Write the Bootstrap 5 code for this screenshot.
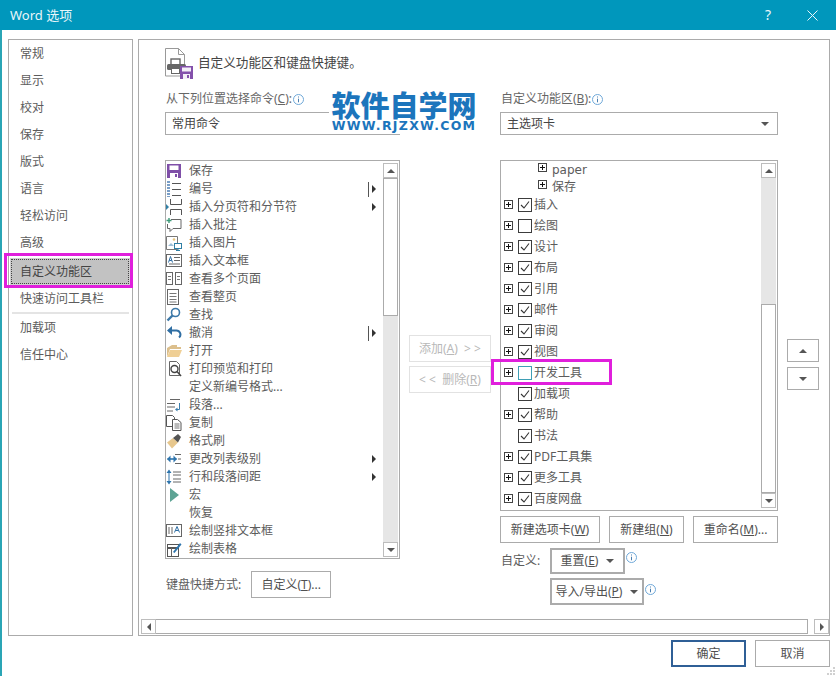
<!DOCTYPE html>
<html lang="zh"><head><meta charset="utf-8"><title>Word 选项</title>
<link href="https://cdn.jsdelivr.net/npm/bootstrap@5.3.0/dist/css/bootstrap.min.css" rel="stylesheet">
<style>
html,body{margin:0;width:836px;height:676px;overflow:hidden;background:#fff}
body{font-family:"Noto Sans","Noto Sans CJK SC",sans-serif;font-size:12px;line-height:18px;color:#5c5c5c}
svg{display:block;flex:none}
.dlg{width:836px;height:676px;border-left:2px solid #2aa5b5}
.ttl{height:30px;background:#0097bc;color:#e8f6fa;font-size:13px;padding-left:10px;margin-left:-2px}
.ttl .q{margin-left:auto;font-size:14px;margin-right:36px}
.ttl .x{margin-right:18px}
.dbody{padding:9px 0 0 6px;gap:5px;height:606px}
.side{width:125px;height:597px;border:1px solid #ababab;flex:none;padding-top:0}
.sitem{height:27px;line-height:27px;padding-left:11px}
.ssel{position:relative;margin:2px 2px 0 1px;padding-left:10px;background:#c2c2c2;color:#444;box-shadow:inset 0 0 0 1px #d0d0d0;outline:1px dotted #444;outline-offset:-2px}
.mag{position:absolute;border:3px solid #e01fdc;pointer-events:none}
.m1{left:-6px;top:-5px;width:129px;height:35px}
.m2{left:352px;top:319px;width:121px;height:26px}
.sep{height:2px;background:#e4e4e4;margin:0 3px}
.pnl{width:692px;height:597px;border:1px solid #ababab;position:relative;flex:none}
.hdr{padding:7px 0 0 26px;height:50px;gap:5px;color:#444}
.hdr span{font-size:12.6px;margin-top:7px}
.cols{padding-left:26px;gap:9px;height:0;flex:1 1 0}
.cl{width:235px;flex:none}
.cm{width:82px;flex:none;padding-top:245px;gap:4px}
.cr{width:278px;flex:none}
.cu{width:32px;flex:none;padding-top:249px;gap:5px}
.lbl{height:18px;line-height:18px;margin-bottom:4px;padding-left:1px;gap:1px;color:#666}
.combo{height:23px;border:1px solid #ababab;line-height:21px;padding-left:6px;margin-bottom:25px;color:#444;background:#fff}
.wbtn{--bs-btn-padding-x:0;--bs-btn-padding-y:0;--bs-btn-font-size:12px;--bs-btn-line-height:25px;--bs-btn-border-radius:0;--bs-btn-border-color:#ababab;--bs-btn-bg:#fff;--bs-btn-color:#505050;--bs-btn-hover-bg:#fff;--bs-btn-hover-color:#505050;--bs-btn-hover-border-color:#ababab;--bs-btn-disabled-bg:#fff;--bs-btn-disabled-color:#b8b8b8;--bs-btn-disabled-border-color:#e2e2e2;--bs-btn-disabled-opacity:1;height:27px;display:flex;align-items:center;justify-content:center;white-space:pre}
.lst{border:1px solid #ababab;overflow:hidden;background:#fff}
.l1{height:399px}
.l2{height:351px}
.rows{flex:1 1 0;min-width:0;overflow:hidden}
.l1 .rows{padding-top:1px}
.cmd{height:18px;flex:none}
.cmd svg{margin-right:7px}
.cmd .arr{margin-left:auto;margin-right:7px;width:0;height:0;border-left:4px solid #333;border-top:4px solid transparent;border-bottom:4px solid transparent}
.cmd .spl{margin-left:auto;margin-right:-1px;width:1px;height:15px;background:#555}
.cmd .spl + .arr{margin-left:4px}
.ph{width:16px;height:16px;margin-right:7px;flex:none}
.vsb{width:15px;flex:none;margin:2px 1px 1px 0}
.sb{height:15px;flex:none;border:1px solid #bdbdbd;background:#fff;justify-content:center;align-items:center}
.up{width:0;height:0;border-left:4px solid transparent;border-right:4px solid transparent;border-bottom:4px solid #555}
.dn{width:0;height:0;border-left:4px solid transparent;border-right:4px solid transparent;border-top:4px solid #555}
.lf{width:0;height:0;border-top:4px solid transparent;border-bottom:4px solid transparent;border-right:4px solid #555}
.rt{width:0;height:0;border-top:4px solid transparent;border-bottom:4px solid transparent;border-left:4px solid #555}
.trk{background:#e6e6e6;flex:none}
.thm{background:#fff;border:1px solid #ababab;flex:none;margin-top:0}
.t1{height:138px}.t2{height:126px}.t3{height:189px}.grow{flex:1 1 0}
.rw{height:21px;padding-left:3px;flex:none;position:relative}
.rw .pb{margin-right:5px}
.rw .cb{margin-right:2px}
.rw .nop{width:9px;flex:none}
.rsub{height:17px;padding-left:37px;flex:none}
.rsub + .rsub{margin-bottom:-1px}
.rsub .pb{margin:-4px 5px 0 0}
.en{font-family:"DejaVu Sans",sans-serif;font-size:12px}
.kb{height:27px;margin-top:12px;gap:10px;padding-left:1px}
.kb .wbtn{width:80px}
.bts{margin-top:5px;gap:9px}
.w1{width:100px}.w2{width:75px}.w3{width:85px}
.cst{margin-top:5px;height:26px;padding-left:1px}
.cst .lab{width:49px}
.thick{--bs-btn-border-color:#ababab;--bs-btn-hover-border-color:#ababab;--bs-btn-border-width:2px;--bs-btn-line-height:22px;height:26px;gap:8px}
.tr1{width:75px}.tr2{width:94px}
.cst2{margin-top:4px;height:27px;padding-left:50px}
.cst2 .thick{height:27px}
.nfo{margin:-8px 0 0 1px}
.nfo2{margin:-4px 0 0 1px}
.ub{width:32px;height:23px}
.hs{height:15px;margin:0 0 1px 2px;flex:none}
.hs .sb{width:15px;height:15px}
.hs .bar{width:653px;border:1px solid #ababab;border-left:0;background:#fff}
.hs .gap{width:6px}
.wm{position:absolute;left:190px;top:48px;width:152px;height:46px;background:#fff;color:#1c75bc;text-align:center}
.wm .a{font-family:"Noto Sans CJK SC",sans-serif;font-size:29px;line-height:32px;font-weight:900;height:32px;margin-left:-2px;white-space:nowrap}
.wm .b{font-family:"DejaVu Sans",sans-serif;font-weight:700;font-size:12.5px;line-height:12px;letter-spacing:1.3px;white-space:nowrap;margin-left:-2px}
.foot{padding:4px 6px 0 0;gap:9px}
.foot .wbtn{width:75px}
.ok{--bs-btn-border-color:#2f5f96;--bs-btn-hover-border-color:#2f5f96;--bs-btn-border-width:2px;--bs-btn-line-height:23px}
.grip{position:absolute;right:1px;bottom:1px}
</style></head><body>
<svg width="0" height="0" style="position:absolute"><defs>
<symbol id="plus" viewBox="0 0 9 9"><rect x=".5" y=".5" width="8" height="8" fill="#fff" stroke="#444"/><path d="M2 4.500h5M4.500 2v5" stroke="#111"/></symbol>
<symbol id="chk" viewBox="0 0 14 14"><rect x=".5" y=".5" width="13" height="13" fill="#fff" stroke="#3c3c3c"/><path d="M3 7l3 3 5-6.500" fill="none" stroke="#333" stroke-width="1.100"/></symbol>
<symbol id="nochk" viewBox="0 0 14 14"><rect x=".5" y=".5" width="13" height="13" fill="#fff" stroke="#3c3c3c"/></symbol>
<symbol id="info" viewBox="0 0 11 11"><circle cx="5.500" cy="5.500" r="5" fill="#fff" stroke="#6fa8d8"/><path d="M5.500 2.500v1M5.500 4.700v3.600" stroke="#4a7fb0"/></symbol>
</defs></svg>
<div class="dlg d-flex flex-column position-relative">
 <div class="ttl d-flex align-items-center flex-none"><span>Word 选项</span><span class="q">?</span>
  <svg class="x" width="11" height="11" viewBox="0 0 11 11"><path d="M.5.5l10 10M10.500.5l-10 10" stroke="#eaf7fb"/></svg></div>
 <div class="dbody d-flex">
  <div class="side">
   <div class="sitem">常规</div><div class="sitem">显示</div><div class="sitem">校对</div><div class="sitem">保存</div><div class="sitem">版式</div><div class="sitem">语言</div><div class="sitem">轻松访问</div><div class="sitem">高级</div>
   <div class="sitem ssel">自定义功能区<div class="mag m1"></div></div>
   <div class="sitem">快速访问工具栏</div>
   <div class="sep"></div>
   <div class="sitem">加载项</div><div class="sitem">信任中心</div>
  </div>
  <div class="pnl d-flex flex-column">
   <div class="hdr d-flex">
    <svg width="28" height="32" viewBox="0 0 28 32"><path d="M.5 1.500h13l6 6V29H.5z" fill="#fff" stroke="#999"/><path d="M13.500 1.500v6h6" fill="none" stroke="#999"/><rect x="6" y="12" width="9" height="6" fill="#fff" stroke="#666" stroke-width="1.400"/><rect x="2" y="17" width="19" height="6" rx="1.500" fill="#666"/><rect x="6.500" y="21.500" width="8" height="5" fill="#fff" stroke="#666"/><rect x="15" y="19" width="13" height="13" fill="#8350ab"/><rect x="17" y="20.500" width="9" height="4" fill="#f3eef7"/><rect x="18" y="27" width="7" height="5" fill="#f3eef7"/><rect x="22" y="28" width="2" height="3" fill="#8350ab"/></svg>
    <span>自定义功能区和键盘快捷键。</span>
   </div>
   <div class="cols d-flex">
    <div class="cl">
     <div class="lbl d-flex align-items-center"><span>从下列位置选择命令(<u>C</u>):</span><svg width="11" height="11"><use href="#info"/></svg></div>
     <div class="combo">常用命令</div>
     <div class="lst l1 d-flex">
      <div class="rows d-flex flex-column">
       <div class="cmd d-flex align-items-center"><svg width="16" height="16" viewBox="0 0 16 16"><path d="M1 1h14v14H1z" fill="#7f4fa8"/><rect x="3.500" y="2.500" width="9" height="4.500" fill="#fff"/><rect x="4" y="10" width="8" height="5" fill="#fff"/><rect x="9" y="11" width="2" height="3" fill="#7f4fa8"/></svg>保存</div>
       <div class="cmd d-flex align-items-center"><svg width="16" height="16" viewBox="0 0 16 16"><path d="M6 2.500h9M6 8.500h9M6 14.500h9" stroke="#555"/><path d="M1 1h3M1 7h3M1 13h3M1 4h3M1 10h3M1 16h3" stroke="#4e7fb5" stroke-width="1.300"/></svg>编号<span class="spl"></span><span class="arr"></span></div>
       <div class="cmd d-flex align-items-center"><svg width="16" height="16" viewBox="0 0 16 16"><path d="M4.500 0v5.500h11V0M4.500 16v-5.500h11V16" fill="none" stroke="#555"/><path d="M0 5l3 3-3 3z" fill="#2f7fa5"/></svg>插入分页符和分节符<span class="arr"></span></div>
       <div class="cmd d-flex align-items-center"><svg width="16" height="16" viewBox="0 0 16 16"><path d="M5 2.500h10v9H7l-3 3v-3H1.500V7" fill="none" stroke="#666"/><path d="M3 1v5M.5 3.500h5" stroke="#3d9a78" stroke-width="1.400"/></svg>插入批注</div>
       <div class="cmd d-flex align-items-center"><svg width="16" height="16" viewBox="0 0 16 16"><path d="M.5 1.500h11v13H.5z" fill="#fff" stroke="#777"/><path d="M2 11l3-3 3 3z" fill="#9fbfd8"/><circle cx="8" cy="4.500" r="1.300" fill="#e5c37c"/><rect x="8.500" y="8.500" width="7" height="5" fill="#fff" stroke="#2f7fa5"/><path d="M12 13.500V15.500M10 15.500h4" stroke="#2f7fa5"/></svg>插入图片</div>
       <div class="cmd d-flex align-items-center"><svg width="16" height="16" viewBox="0 0 16 16"><rect x=".5" y="1.500" width="15" height="12" fill="#fff" stroke="#666"/><path d="M2.500 9.500l2-6 2 6M3.300 7.500h2.400" fill="none" stroke="#2d6da3"/><path d="M8 4.500h6M8 7.500h6M3 11h11" stroke="#666"/></svg>插入文本框</div>
       <div class="cmd d-flex align-items-center"><svg width="16" height="16" viewBox="0 0 16 16"><rect x=".5" y="1.500" width="6" height="12" fill="#fff" stroke="#666"/><rect x="9.500" y="1.500" width="6" height="12" fill="#fff" stroke="#666"/><path d="M2 5.500h3M2 8.500h3M11 5.500h3M11 8.500h3" stroke="#777"/></svg>查看多个页面</div>
       <div class="cmd d-flex align-items-center"><svg width="16" height="16" viewBox="0 0 16 16"><rect x="1.500" y=".5" width="11" height="15" fill="#fff" stroke="#666"/><path d="M3.500 4.500h7M3.500 7.500h7M3.500 10.500h7M3.500 13h7" stroke="#777"/></svg>查看整页</div>
       <div class="cmd d-flex align-items-center"><svg width="16" height="16" viewBox="0 0 16 16"><circle cx="9.500" cy="5.500" r="4" fill="#fff" stroke="#3c78a8" stroke-width="1.600"/><path d="M6.500 8.500L1.500 13.500" stroke="#3c78a8" stroke-width="2.400"/></svg>查找</div>
       <div class="cmd d-flex align-items-center"><svg width="16" height="16" viewBox="0 0 16 16"><path d="M2.500 5.500H10a4 4 0 0 1 3 7" fill="none" stroke="#2f6ea3" stroke-width="2"/><path d="M6 1L1 5.500 6 10z" fill="#2f6ea3"/></svg>撤消<span class="spl"></span><span class="arr"></span></div>
       <div class="cmd d-flex align-items-center"><svg width="16" height="16" viewBox="0 0 16 16"><path d="M1 14V5l5-3h5v2h4v2H4z" fill="#dcbf8c"/><path d="M1 14l3-7h12l-3 7z" fill="#efcf95"/></svg>打开</div>
       <div class="cmd d-flex align-items-center"><svg width="16" height="16" viewBox="0 0 16 16"><path d="M3.500.5h7l3 3v11h-10z" fill="#fff" stroke="#666"/><circle cx="8.500" cy="8" r="3.500" fill="#fff" stroke="#444" stroke-width="1.400"/><path d="M11 10.500l4 4.500" stroke="#444" stroke-width="1.600"/></svg>打印预览和打印</div>
       <div class="cmd d-flex align-items-center"><span class="ph"></span>定义新编号格式...</div>
       <div class="cmd d-flex align-items-center"><svg width="16" height="16" viewBox="0 0 16 16"><path d="M4 2.500h10M1 6.500h8M1 10h8M1 14h6" stroke="#666"/><path d="M13.500 6v6.500H10" fill="none" stroke="#3d7fae"/><path d="M11.500 10.500L9 12.500l2.500 2z" fill="#3d7fae"/></svg>段落...</div>
       <div class="cmd d-flex align-items-center"><svg width="16" height="16" viewBox="0 0 16 16"><path d="M.5.5h6l2 2v9h-8z" fill="#fff" stroke="#555"/><path d="M6.500 4.500h5l3.500 3v8h-8.500z" fill="#fff" stroke="#555"/><path d="M8.500 9h5M8.500 11h5M8.500 13h5" stroke="#777"/></svg>复制</div>
       <div class="cmd d-flex align-items-center"><svg width="16" height="16" viewBox="0 0 16 16"><path d="M1 9.500L7 5l5 4.500-6 6z" fill="#e7c78d"/><path d="M7 5l5-4 3 3-3 5.500z" fill="#555"/></svg>格式刷</div>
       <div class="cmd d-flex align-items-center"><svg width="16" height="16" viewBox="0 0 16 16"><path d="M9 3.500h6M12 8h3M9 12.500h6" stroke="#666"/><path d="M1.500 8h9" stroke="#2e75ad" stroke-width="1.600"/><path d="M4.500 4.500L1 8l3.500 3.500zM7.500 4.500L11 8l-3.500 3.500z" fill="#2e75ad"/></svg>更改列表级别<span class="arr"></span></div>
       <div class="cmd d-flex align-items-center"><svg width="16" height="16" viewBox="0 0 16 16"><path d="M7 3h8M7 6h8M7 10h8M7 13h8" stroke="#666"/><path d="M3 3v10" stroke="#2e75ad"/><path d="M.5 4L3 .5 5.500 4zM.5 12L3 15.500 5.500 12z" fill="#2e75ad"/></svg>行和段落间距<span class="arr"></span></div>
       <div class="cmd d-flex align-items-center"><svg width="16" height="16" viewBox="0 0 16 16"><path d="M4 1l9 7-9 7z" fill="#5da394"/></svg>宏</div>
       <div class="cmd d-flex align-items-center"><span class="ph"></span>恢复</div>
       <div class="cmd d-flex align-items-center"><svg width="16" height="16" viewBox="0 0 16 16"><rect x=".5" y="1.500" width="15" height="12" fill="#fff" stroke="#666"/><path d="M3 4v7M6 4v7" stroke="#666"/><path d="M8.500 9.500l2.500-6 2.500 6M9.500 7.500h3" fill="none" stroke="#2d6da3"/></svg>绘制竖排文本框</div>
       <div class="cmd d-flex align-items-center"><svg width="16" height="16" viewBox="0 0 16 16"><rect x="1.500" y="3.500" width="11" height="12" fill="#fff" stroke="#555"/><path d="M1.500 7h11" stroke="#555" stroke-width="2"/><path d="M5.500 7v8" stroke="#666"/><path d="M7 11l7-9 1.500 1.500-7 8.500z" fill="#2e75ad"/></svg>绘制表格</div>
       <div class="cmd d-flex align-items-center"><svg width="16" height="16" viewBox="0 0 16 16"><path d="M1 8h14M4 4v12M12 4v12" stroke="#666"/></svg></div>
      </div>
      <div class="vsb d-flex flex-column"><div class="sb d-flex"><span class="up"></span></div><div class="thm t1"></div><div class="trk grow"></div><div class="sb d-flex"><span class="dn"></span></div></div>
     </div>
     <div class="kb d-flex align-items-center"><span>键盘快捷方式:</span><button type="button" class="btn wbtn"><span>自定义(<u>T</u>)...</span></button></div>
    </div>
    <div class="cm d-flex flex-column">
     <button type="button" class="btn wbtn" disabled><span>添加(<u>A</u>)  &gt; &gt;</span></button>
     <button type="button" class="btn wbtn" disabled><span>&lt; &lt;  删除(<u>R</u>)</span></button>
    </div>
    <div class="cr">
     <div class="lbl d-flex align-items-center"><span>自定义功能区(<u>B</u>):</span><svg width="11" height="11"><use href="#info"/></svg></div>
     <div class="combo d-flex align-items-center justify-content-between pe-2"><span>主选项卡</span><span class="dn"></span></div>
     <div class="lst l2 d-flex">
      <div class="rows d-flex flex-column">
       <div class="rsub d-flex align-items-center"><svg class="pb" width="9" height="9"><use href="#plus"/></svg><span class="en">paper</span></div>
       <div class="rsub d-flex align-items-center"><svg class="pb" width="9" height="9"><use href="#plus"/></svg><span>保存</span></div>
       <div class="rw d-flex align-items-center"><svg class="pb" width="9" height="9"><use href="#plus"/></svg><svg class="cb" width="14" height="14"><use href="#chk"/></svg>插入</div>
       <div class="rw d-flex align-items-center"><svg class="pb" width="9" height="9"><use href="#plus"/></svg><svg class="cb" width="14" height="14"><use href="#nochk"/></svg>绘图</div>
       <div class="rw d-flex align-items-center"><svg class="pb" width="9" height="9"><use href="#plus"/></svg><svg class="cb" width="14" height="14"><use href="#chk"/></svg>设计</div>
       <div class="rw d-flex align-items-center"><svg class="pb" width="9" height="9"><use href="#plus"/></svg><svg class="cb" width="14" height="14"><use href="#chk"/></svg>布局</div>
       <div class="rw d-flex align-items-center"><svg class="pb" width="9" height="9"><use href="#plus"/></svg><svg class="cb" width="14" height="14"><use href="#chk"/></svg>引用</div>
       <div class="rw d-flex align-items-center"><svg class="pb" width="9" height="9"><use href="#plus"/></svg><svg class="cb" width="14" height="14"><use href="#chk"/></svg>邮件</div>
       <div class="rw d-flex align-items-center"><svg class="pb" width="9" height="9"><use href="#plus"/></svg><svg class="cb" width="14" height="14"><use href="#chk"/></svg>审阅</div>
       <div class="rw d-flex align-items-center"><svg class="pb" width="9" height="9"><use href="#plus"/></svg><svg class="cb" width="14" height="14"><use href="#chk"/></svg>视图</div>
       <div class="rw d-flex align-items-center"><svg class="pb" width="9" height="9"><use href="#plus"/></svg><svg class="cb" width="14" height="14" viewBox="0 0 14 14"><rect x=".5" y=".5" width="13" height="13" fill="#fff" stroke="#3f9fb5"/></svg>开发工具</div>
       <div class="rw d-flex align-items-center"><span class="pb nop"></span><svg class="cb" width="14" height="14"><use href="#chk"/></svg>加载项</div>
       <div class="rw d-flex align-items-center"><svg class="pb" width="9" height="9"><use href="#plus"/></svg><svg class="cb" width="14" height="14"><use href="#chk"/></svg>帮助</div>
       <div class="rw d-flex align-items-center"><span class="pb nop"></span><svg class="cb" width="14" height="14"><use href="#chk"/></svg>书法</div>
       <div class="rw d-flex align-items-center"><svg class="pb" width="9" height="9"><use href="#plus"/></svg><svg class="cb" width="14" height="14"><use href="#chk"/></svg>PDF工具集</div>
       <div class="rw d-flex align-items-center"><svg class="pb" width="9" height="9"><use href="#plus"/></svg><svg class="cb" width="14" height="14"><use href="#chk"/></svg>更多工具</div>
       <div class="rw d-flex align-items-center"><svg class="pb" width="9" height="9"><use href="#plus"/></svg><svg class="cb" width="14" height="14"><use href="#chk"/></svg>百度网盘</div>
      </div>
      <div class="vsb d-flex flex-column"><div class="sb d-flex"><span class="up"></span></div><div class="trk t2"></div><div class="thm t3"></div><div class="sb d-flex"><span class="dn"></span></div></div>
     </div>
     <div class="bts d-flex">
      <button type="button" class="btn wbtn w1"><span>新建选项卡(<u>W</u>)</span></button>
      <button type="button" class="btn wbtn w2"><span>新建组(<u>N</u>)</span></button>
      <button type="button" class="btn wbtn w3"><span>重命名(<u>M</u>)...</span></button>
     </div>
     <div class="cst d-flex align-items-center"><span class="lab">自定义:</span><button type="button" class="btn wbtn thick tr1"><span>重置(<u>E</u>)</span><span class="dn"></span></button><svg class="nfo" width="11" height="11"><use href="#info"/></svg></div>
     <div class="cst2 d-flex align-items-center"><button type="button" class="btn wbtn thick tr2"><span>导入/导出(<u>P</u>)</span><span class="dn"></span></button><svg class="nfo2" width="11" height="11"><use href="#info"/></svg></div>
    </div>
    <div class="cu d-flex flex-column">
     <button type="button" class="btn wbtn ub"><span class="up"></span></button>
     <button type="button" class="btn wbtn ub"><span class="dn"></span></button>
    </div>
   </div>
   <div class="hs d-flex">
    <div class="sb d-flex"><span class="lf"></span></div><div class="bar"></div><div class="gap"></div><div class="sb d-flex"><span class="rt"></span></div>
   </div>
   <div class="mag m2"></div>
   <div class="wm"><div class="a">软件自学网</div><div class="b">WWW.RJZXW.COM</div></div>
  </div>
 </div>
 <div class="foot d-flex justify-content-end">
  <button type="button" class="btn wbtn ok">确定</button>
  <button type="button" class="btn wbtn">取消</button>
 </div>
 <svg class="grip" width="9" height="9" viewBox="0 0 9 9"><path d="M7 1h2v2H7zM4 4h2v2H4zM7 4h2v2H7zM1 7h2v2H1zM4 7h2v2H4zM7 7h2v2H7z" fill="#d0d0d0"/></svg>
</div>
<script src="https://cdn.jsdelivr.net/npm/bootstrap@5.3.0/dist/js/bootstrap.bundle.min.js"></script>
</body></html>
